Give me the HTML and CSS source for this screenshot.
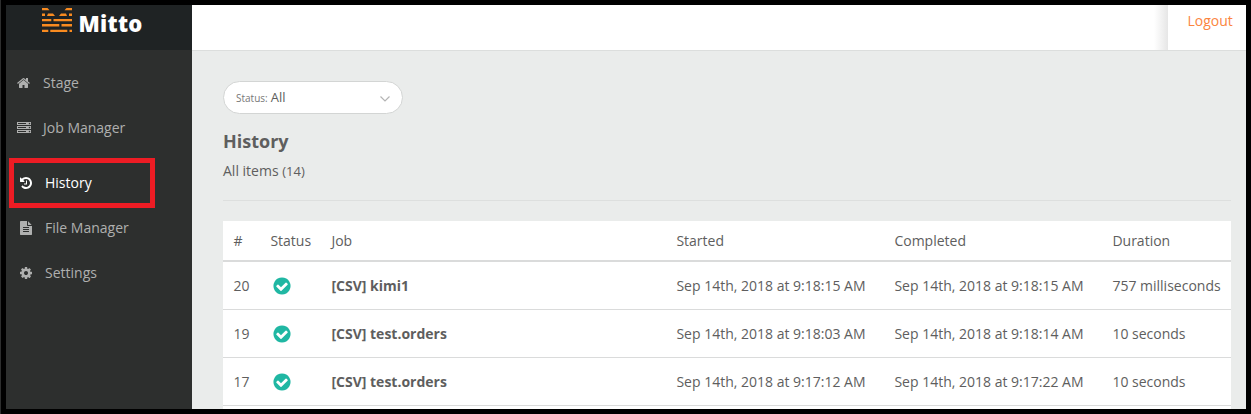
FILE: index.html
```
<!DOCTYPE html>
<html lang="en">
<head>
  <meta charset="UTF-8">
  <meta name="viewport" content="width=device-width, initial-scale=1.0">
  <title>Mitto - History</title>
  <link rel="stylesheet" href="styles.css">
</head>
<body>
  <svg class="defs" width="0" height="0">
    <symbol id="check" viewBox="0 0 1792 1792">
      <path d="M1412 734q0-28-18-46l-91-90q-19-19-45-19t-45 19l-408 407-226-226q-19-19-45-19t-45 19l-91 90q-18 18-18 46 0 27 18 45l362 362q19 19 45 19 27 0 46-19l543-543q18-18 18-45zm252 162q0 209-103 385.5t-279.5 279.5-385.5 103-385.5-103-279.5-279.5-103-385.5 103-385.5 279.5-279.5 385.5-103 385.5 103 279.5 279.5 103 385.5z"/>
    </symbol>
  </svg>

  <div class="app">
    <aside class="sidebar">
      <div class="brand">
        <svg class="logo" viewBox="0 0 30 24" width="30" height="24">
          <path d="M0 0h5.500l2 2.300H0zM24.500 0H30v2.300h-7.500zM0 5.600h3V8H0zM6 5.600h5L13 8H5zM19 5.600h5l1 2.400h-8zM27 5.600h3V8h-3zM0 11h9.300v2.300H0zM11.500 11H30v2.300H11.500zM0 16h17.300v2.600H0zM19.500 16H30v2.600H19.500zM0 21.700h6.300V24H0zM8.300 21.700h17V24h-17zM27.500 21.700H30V24h-2.500z"/>
        </svg>
        <span class="brand-name">Mitto</span>
      </div>
      <nav class="menu">
        <a class="menu-item" href="#">
          <svg class="icon" viewBox="0 0 1792 1792"><path d="M1408 992v480q0 26-19 45t-45 19h-384v-384h-256v384h-384q-26 0-45-19t-19-45v-480q0-1 .5-3t.5-3l575-474 575 474q1 2 1 6zm223-69l-62 74q-8 9-21 11h-3q-13 0-21-7l-692-577-692 577q-12 8-24 7-13-2-21-11l-62-74q-8-10-7-23.500t11-21.500l719-599q32-26 76-26t76 26l244 204v-195q0-14 9-23t23-9h192q14 0 23 9t9 23v408l219 182q10 8 11 21.500t-7 23.500z"/></svg>
          Stage
        </a>
        <a class="menu-item" href="#">
          <svg class="icon" viewBox="0 0 1792 1792"><path d="M128 1408h1024v-128h-1024v128zm0-512h1024v-128h-1024v128zm1568 448q0-40-28-68t-68-28-68 28-28 68 28 68 68 28 68-28 28-68zm-1568-960h1024v-128h-1024v128zm1568 448q0-40-28-68t-68-28-68 28-28 68 28 68 68 28 68-28 28-68zm0-512q0-40-28-68t-68-28-68 28-28 68 28 68 68 28 68-28 28-68zm96 832v384h-1792v-384h1792zm0-512v384h-1792v-384h1792zm0-512v384h-1792v-384h1792z"/></svg>
          Job Manager
        </a>
        <a class="menu-item active" href="#">
          <svg class="icon" viewBox="0 0 1792 1792"><path d="M1664 896q0 156-61 298t-164 245-245 164-298 61q-172 0-327-72.500t-264-204.500q-7-10-6.500-22.500t8.500-20.500l137-138q10-9 25-9 16 2 23 12 73 95 179 147t225 52q104 0 198.500-40.500t163.500-109.500 109.500-163.500 40.500-198.500-40.500-198.500-109.500-163.500-163.500-109.500-198.500-40.500q-98 0-188 35.500t-160 101.500l137 138q31 30 14 69-17 40-59 40h-448q-26 0-45-19t-19-45v-448q0-42 40-59 39-17 69 14l130 129q107-101 244.500-156.500t284.500-55.500q156 0 298 61t245 164 164 245 61 298zm-640-288v448q0 14-9 23t-23 9h-320q-14 0-23-9t-9-23v-64q0-14 9-23t23-9h224v-352q0-14 9-23t23-9h64q14 0 23 9t9 23z"/></svg>
          History
        </a>
        <a class="menu-item narrow" href="#">
          <svg class="icon" viewBox="0 0 1792 1792"><path d="M1596 476q14 14 28 36h-472v-472q22 14 36 28zm-476 164h544v1056q0 40-28 68t-68 28h-1344q-40 0-68-28t-28-68v-1600q0-40 28-68t68-28h800v544q0 40 28 68t68 28zm160 736v-64q0-14-9-23t-23-9h-704q-14 0-23 9t-9 23v64q0 14 9 23t23 9h704q14 0 23-9t9-23zm0-256v-64q0-14-9-23t-23-9h-704q-14 0-23 9t-9 23v64q0 14 9 23t23 9h704q14 0 23-9t9-23zm0-256v-64q0-14-9-23t-23-9h-704q-14 0-23 9t-9 23v64q0 14 9 23t23 9h704q14 0 23-9t9-23z"/></svg>
          File Manager
        </a>
        <a class="menu-item narrow" href="#">
          <svg class="icon" viewBox="0 0 1792 1792"><path d="M1152 896q0-106-75-181t-181-75-181 75-75 181 75 181 181 75 181-75 75-181zm512-109v222q0 12-8 23t-20 13l-185 28q-19 54-39 91 35 50 107 138 10 12 10 25t-9 23q-27 37-99 108t-94 71q-12 0-26-9l-138-108q-44 23-91 38-16 136-29 186-7 28-36 28h-222q-14 0-24.500-8.500t-11.500-21.500l-28-184q-49-16-90-37l-141 107q-10 9-25 9-14 0-25-11-126-114-165-168-7-10-7-23 0-12 8-23 15-21 51-66.500t54-70.500q-27-50-41-99l-183-27q-13-2-21-12.500t-8-23.500v-222q0-12 8-23t19-13l186-28q14-46 39-92-40-57-107-138-10-12-10-24 0-10 9-23 26-36 98.500-107.500t94.500-71.500q13 0 26 10l138 107q44-23 91-38 16-136 29-186 7-28 36-28h222q14 0 24.500 8.500t11.500 21.500l28 184q49 16 90 37l142-107q9-9 24-9 13 0 25 10 129 119 165 170 7 8 7 22 0 12-8 23-15 21-51 66.500t-54 70.500q26 50 41 98l183 28q13 2 21 12.500t8 23.500z"/></svg>
          Settings
        </a>
      </nav>
    </aside>

    <main class="main">
      <header class="topbar">
        <div class="topbar-shade"></div>
        <a class="logout" href="#">Logout</a>
      </header>

      <section class="content">
        <div class="filter">
          <span class="filter-label">Status:</span>
          <span class="filter-value">All</span>
          <svg class="caret" viewBox="0 0 10 6" width="10" height="6"><path d="M.5.5L5 5 9.500.5"/></svg>
        </div>
        <h1>History</h1>
        <p class="summary">All items <small>(14)</small></p>

        <table class="jobs">
          <thead>
            <tr>
              <th class="col-id">#</th>
              <th class="col-status">Status</th>
              <th class="col-job">Job</th>
              <th class="col-date">Started</th>
              <th class="col-date">Completed</th>
              <th>Duration</th>
            </tr>
          </thead>
          <tbody>
            <tr>
              <td>20</td>
              <td><svg class="ok"><use href="#check"/></svg></td>
              <td class="job">[CSV] kimi1</td>
              <td>Sep 14th, 2018 at 9:18:15 AM</td>
              <td>Sep 14th, 2018 at 9:18:15 AM</td>
              <td>757 milliseconds</td>
            </tr>
            <tr>
              <td>19</td>
              <td><svg class="ok"><use href="#check"/></svg></td>
              <td class="job">[CSV] test.orders</td>
              <td>Sep 14th, 2018 at 9:18:03 AM</td>
              <td>Sep 14th, 2018 at 9:18:14 AM</td>
              <td>10 seconds</td>
            </tr>
            <tr>
              <td>17</td>
              <td><svg class="ok"><use href="#check"/></svg></td>
              <td class="job">[CSV] test.orders</td>
              <td>Sep 14th, 2018 at 9:17:12 AM</td>
              <td>Sep 14th, 2018 at 9:17:22 AM</td>
              <td>10 seconds</td>
            </tr>
          </tbody>
        </table>
        <div class="next-row"></div>
      </section>
    </main>
  </div>
</body>
</html>
```
FILE: styles.css
```
* {
  box-sizing: border-box;
}
body {
  margin: 0;
  height: 414px;
  overflow: hidden;
  border-left: 1px solid #2d2e2e;
  background-color: #000;
  font-family: "Open Sans", sans-serif;
  font-size: 14px;
  line-height: 20px;
  color: #5e5e5e;
}
a {
  text-decoration: none;
}
.defs {
  display: block;
}
.app {
  display: flex;
  height: 414px;
  border: 5px solid #000;
}

/* sidebar */
.sidebar {
  width: 186px;
  background-color: #2d2f2e;
}
.brand {
  display: flex;
  height: 45px;
  padding: 3px 0 0 36px;
  background-color: #1f2324;
}
.logo {
  fill: #f98b20;
}
.brand-name {
  margin-left: 6.5px;
  font-size: 22px;
  font-weight: 800;
  line-height: 30px;
  letter-spacing: .3px;
  color: #fff;
}
.menu {
  padding-top: 10px;
}
.menu-item {
  display: flex;
  align-items: center;
  gap: 12px;
  height: 45px;
  padding-left: 11px;
  color: #afb0af;
}
.menu-item.narrow {
  padding-left: 13px;
}
.menu-item.active {
  width: 146px;
  height: 50px;
  margin: 8px 0 -3px 3px;
  padding-left: 5px;
  border: 5px solid #ed1c24;
  color: #fff;
}
.icon {
  width: 14px;
  height: 14px;
  fill: currentColor;
}

/* top bar */
.main {
  flex: 1;
  background-color: #eaeceb;
}
.topbar {
  display: flex;
  justify-content: flex-end;
  height: 46px;
  background-color: #fff;
  border-bottom: 1px solid #dcdedd;
}
.topbar-shade {
  width: 14px;
  background: linear-gradient(to right, #fff, #e6e6e6);
}
.logout {
  width: 78px;
  padding: 6px 0 0 19.5px;
  color: #fb8540;
}

/* content */
.content {
  padding: 30px 15px 0 31px;
}
.filter {
  display: flex;
  align-items: center;
  width: 180px;
  height: 33px;
  padding: 0 12px;
  background-color: #fff;
  border: 1px solid #d3d5d4;
  border-radius: 17px;
}
.filter-label {
  font-size: 10px;
  color: #777;
}
.filter-value {
  margin: -2px 0 0 3px;
  font-size: 13px;
}
.caret {
  margin: 3px 0 0 auto;
  fill: none;
  stroke: #b4b4b4;
  stroke-width: 1.2;
}
h1 {
  margin: 15px 0 0;
  font-size: 18px;
  line-height: 25px;
}
.summary {
  margin: 7px 0 20px;
  padding-bottom: 19px;
  border-bottom: 1px solid #dddfde;
}
.summary small {
  font-size: 13px;
}

/* job table */
.jobs {
  width: 100%;
  table-layout: fixed;
  border-spacing: 0;
  background-color: #fff;
}
.jobs th {
  height: 41px;
  padding: 0 0 0 10.4px;
  border-bottom: 2px solid #dadbdb;
  font-weight: 400;
  text-align: left;
}
.jobs td {
  height: 48px;
  padding: 0 0 0 10.4px;
  border-bottom: 1px solid #dadbdb;
  white-space: nowrap;
}
.col-id {
  width: 37px;
}
.col-status {
  width: 61px;
}
.col-job {
  width: 345px;
}
.col-date {
  width: 218px;
}
.jobs .job {
  font-weight: 700;
}
.ok {
  display: block;
  width: 20px;
  height: 20px;
  margin-left: 2px;
  fill: #20b7a3;
}
.next-row {
  height: 3px;
  background-color: #fff;
}
```
